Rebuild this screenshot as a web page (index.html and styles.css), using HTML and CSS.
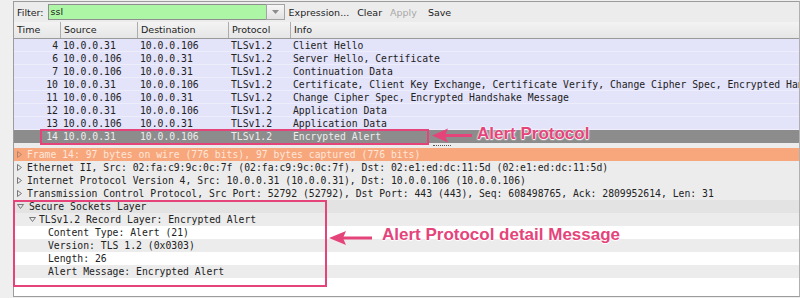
FILE: index.html
```html
<!DOCTYPE html>
<html lang="en">
<head>
    <meta charset="UTF-8">
    <title>Wireshark - SSL Encrypted Alert</title>
    <link rel="stylesheet" href="styles.css">
</head>
<body>
    <div class="window">
        <div class="filter-bar">
            <span class="filter-label">Filter:</span>
            <div class="filter-combo">
                <div class="filter-input">ssl</div>
                <div class="filter-drop"><svg width="7" height="4" viewBox="0 0 7 4"><polygon points="0,0 7,0 3.5,4" fill="#8c8c8c"/></svg></div>
            </div>
            <span class="filter-btn">Expression...</span>
            <span class="filter-btn">Clear</span>
            <span class="filter-btn disabled">Apply</span>
            <span class="filter-btn save">Save</span>
        </div>

        <div class="packet-list">
            <div class="packet-head">
                <div>Time</div>
                <div>Source</div>
                <div>Destination</div>
                <div>Protocol</div>
                <div>Info</div>
            </div>
            <div class="packet-row"><div class="num">4</div><div>10.0.0.31</div><div>10.0.0.106</div><div>TLSv1.2</div><div>Client Hello</div></div>
            <div class="packet-row"><div class="num">6</div><div>10.0.0.106</div><div>10.0.0.31</div><div>TLSv1.2</div><div>Server Hello, Certificate</div></div>
            <div class="packet-row"><div class="num">7</div><div>10.0.0.106</div><div>10.0.0.31</div><div>TLSv1.2</div><div>Continuation Data</div></div>
            <div class="packet-row"><div class="num">10</div><div>10.0.0.31</div><div>10.0.0.106</div><div>TLSv1.2</div><div>Certificate, Client Key Exchange, Certificate Verify, Change Cipher Spec, Encrypted Handshake Message</div></div>
            <div class="packet-row"><div class="num">11</div><div>10.0.0.106</div><div>10.0.0.31</div><div>TLSv1.2</div><div>Change Cipher Spec, Encrypted Handshake Message</div></div>
            <div class="packet-row"><div class="num">12</div><div>10.0.0.31</div><div>10.0.0.106</div><div>TLSv1.2</div><div>Application Data</div></div>
            <div class="packet-row"><div class="num">13</div><div>10.0.0.106</div><div>10.0.0.31</div><div>TLSv1.2</div><div>Application Data</div></div>
            <div class="packet-row selected"><div class="num">14</div><div>10.0.0.31</div><div>10.0.0.106</div><div>TLSv1.2</div><div>Encrypted Alert</div></div>
        </div>

        <div class="splitter"><span class="grip"></span></div>

        <div class="details">
            <div class="tree-row frame"><svg class="twisty" width="5" height="7" viewBox="0 0 5 7"><polygon points="0.5,0.5 4.5,3.5 0.5,6.5" fill="none" stroke="#b7846a"/></svg>Frame 14: 97 bytes on wire (776 bits), 97 bytes captured (776 bits)</div>
            <div class="tree-row shade"><svg class="twisty" width="5" height="7" viewBox="0 0 5 7"><polygon points="0.5,0.5 4.5,3.5 0.5,6.5" fill="none" stroke="#777"/></svg>Ethernet II, Src: 02:fa:c9:9c:0c:7f (02:fa:c9:9c:0c:7f), Dst: 02:e1:ed:dc:11:5d (02:e1:ed:dc:11:5d)</div>
            <div class="tree-row shade"><svg class="twisty" width="5" height="7" viewBox="0 0 5 7"><polygon points="0.5,0.5 4.5,3.5 0.5,6.5" fill="none" stroke="#777"/></svg>Internet Protocol Version 4, Src: 10.0.0.31 (10.0.0.31), Dst: 10.0.0.106 (10.0.0.106)</div>
            <div class="tree-row shade"><svg class="twisty" width="5" height="7" viewBox="0 0 5 7"><polygon points="0.5,0.5 4.5,3.5 0.5,6.5" fill="none" stroke="#777"/></svg>Transmission Control Protocol, Src Port: 52792 (52792), Dst Port: 443 (443), Seq: 608498765, Ack: 2809952614, Len: 31</div>
            <div class="tree-row dark"><svg class="twisty" width="7" height="5" viewBox="0 0 7 5"><polygon points="0.5,0.5 6.5,0.5 3.5,4.5" fill="none" stroke="#777"/></svg>Secure Sockets Layer</div>
            <div class="tree-row shade level1"><svg class="twisty" width="7" height="5" viewBox="0 0 7 5"><polygon points="0.5,0.5 6.5,0.5 3.5,4.5" fill="none" stroke="#777"/></svg>TLSv1.2 Record Layer: Encrypted Alert</div>
            <div class="tree-row level2">Content Type: Alert (21)</div>
            <div class="tree-row shade level2">Version: TLS 1.2 (0x0303)</div>
            <div class="tree-row level2">Length: 26</div>
            <div class="tree-row shade level2">Alert Message: Encrypted Alert</div>
        </div>
    </div>

    <!-- callouts drawn over the screenshot -->
    <svg class="callouts" width="800" height="298" viewBox="0 0 800 298">
        <rect x="41" y="130" width="387" height="14" fill="none" stroke="#e5447b" stroke-width="2"/>
        <line x1="444" y1="135.5" x2="472" y2="135.5" stroke="#e5447b" stroke-width="3"/>
        <polygon points="432,135.5 448,128.5 445,135.5 448,142.5" fill="#e5447b"/>
        <rect x="14" y="201" width="312" height="85" fill="none" stroke="#e5447b" stroke-width="2"/>
        <line x1="342" y1="238" x2="372" y2="238" stroke="#e5447b" stroke-width="3"/>
        <polygon points="329,238 346,231 343,238 346,245" fill="#e5447b"/>
    </svg>
    <div class="callout-text alert">Alert Protocol</div>
    <div class="callout-text detail">Alert Protocol detail Message</div>
</body>
</html>
```

FILE: styles.css
```css
body {
    margin: 0;
    width: 800px;
    height: 298px;
    overflow: hidden;
    background: #efefef;
    font-family: "DejaVu Sans", sans-serif;
    font-size: 9.5px;
    color: #1c1c1c;
    position: relative;
}

.window {
    margin: 1px 0 0 13px;
    height: 294px;
    border: 1px solid #9c9c9c;
    border-right: 1px solid #b0b0b0;
    display: flex;
    flex-direction: column;
    background: #ececec;
    overflow: hidden;
}

.filter-bar {
    height: 20px;
    display: flex;
    align-items: center;
    padding-left: 3px;
    background: #ececec;
}

.filter-label {
    margin-right: 4px;
}

.filter-combo {
    display: flex;
    height: 16px;
    margin-right: 4px;
}

.filter-input {
    width: 215px;
    padding-left: 2px;
    line-height: 14px;
    background: #adf6a6;
    border: 1px solid #8e8e8e;
    border-right: none;
}

.filter-drop {
    width: 17px;
    border: 1px solid #a4a4a4;
    background: linear-gradient(#f6f6f6, #e2e2e2);
    display: flex;
    align-items: center;
    justify-content: center;
}

.filter-btn {
    margin-right: 8px;
}

.filter-btn.disabled {
    color: #a8a8a8;
    margin-right: 11px;
}

.packet-list {
    background: #e4e4fa;
}

.packet-head,
.packet-row {
    display: grid;
    grid-template-columns: 46px 77px 91px 62px 1fr;
}

.packet-head {
    height: 16px;
    line-height: 16px;
    background: linear-gradient(#f3f3f3, #e6e6e6);
    border-bottom: 1px solid #9a9a9a;
}

.packet-head div {
    padding-left: 3px;
    border-left: 1px solid #acacac;
}

.packet-head div:first-child {
    border-left: none;
}

.packet-row {
    height: 13px;
    line-height: 13px;
    font-family: "DejaVu Sans Mono", monospace;
    font-size: 9.75px;
    color: #222;
    background: linear-gradient(#e3e3fa 12px, #ededfc 12px);
}

.packet-row div {
    padding-left: 3px;
    white-space: nowrap;
    overflow: hidden;
}

.packet-row .num {
    text-align: right;
    padding: 0 2px 0 0;
}

.packet-row.selected {
    background: #8c8c8c;
    color: #ececec;
}

.splitter {
    height: 5px;
    background: #ececec;
    position: relative;
}

.splitter .grip {
    position: absolute;
    left: 419px;
    top: 2px;
    width: 18px;
    border-top: 1px dotted #555;
}

.details {
    flex: 1;
    background: #ffffff;
}

.tree-row {
    height: 13px;
    line-height: 13px;
    padding-left: 3px;
    font-family: "DejaVu Sans Mono", monospace;
    font-size: 9.75px;
    color: #222;
    white-space: nowrap;
    overflow: hidden;
    display: flex;
    align-items: center;
}

.tree-row .twisty {
    flex: none;
    margin-right: 5px;
}

.tree-row.frame {
    background: #f8a77d;
    color: #fde6d8;
}

.tree-row.shade {
    background: #ececec;
}

.tree-row.dark {
    background: #e3e3e3;
}

.tree-row.level1 {
    padding-left: 15px;
}

.tree-row.level1 .twisty {
    margin-right: 3px;
}

.tree-row.level2 {
    padding-left: 34px;
}

.callouts {
    position: absolute;
    left: 0;
    top: 0;
}

.callout-text {
    position: absolute;
    font-family: "Liberation Sans", Arial, sans-serif;
    font-weight: bold;
    font-size: 17px;
    line-height: 17px;
    color: #e5447b;
    white-space: nowrap;
    text-shadow: 0 0 2px #fff, 0 0 2px #fff, 0 1px 1px #fff;
}

.callout-text.alert {
    left: 477px;
    top: 125px;
}

.callout-text.detail {
    left: 382px;
    top: 226px;
}
```
